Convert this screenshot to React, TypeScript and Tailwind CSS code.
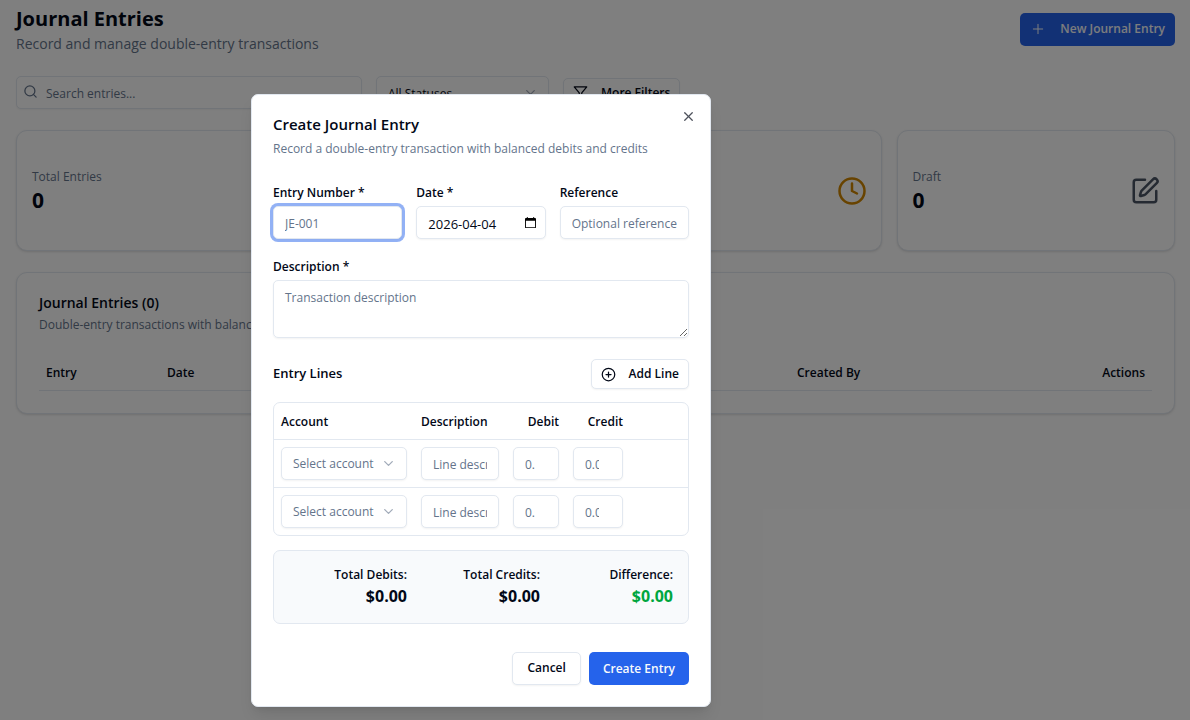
import type { ComponentProps, ReactNode } from "react";
import { ChevronDown, CirclePlus, Clock, Plus, Search, SquarePen, X } from "lucide-react";

const fieldClass =
  "h-[33px] w-full min-w-0 rounded-[5px] border border-[#e2e8f0] bg-white pt-0.5 pl-[11px] text-[#020817] shadow-xs outline-none placeholder:text-[#64748b]";

const outlineButtonClass =
  "flex items-center justify-center rounded-[5px] border border-[#e2e8f0] bg-white text-xs font-semibold text-[#020817] shadow-xs";

function FilterIcon() {
  return (
    <svg viewBox="0 0 24 24" className="size-[15px]" fill="none" stroke="currentColor" strokeWidth="2" strokeLinecap="round" strokeLinejoin="round" aria-hidden="true">
      <polygon points="22 3 2 3 10 12.46 10 19 14 21 14 12.46 22 3" />
    </svg>
  );
}

function CalendarIcon() {
  return (
    <svg viewBox="0 0 12 13" className="h-3 w-[11px]" aria-hidden="true">
      <path fill="#000" fillRule="evenodd" d="M2 0h1v1h6V0h1v1h1a1 1 0 0 1 1 1v9a1 1 0 0 1-1 1H1a1 1 0 0 1-1-1V2a1 1 0 0 1 1-1h1zM1 4v7h10V4z" />
    </svg>
  );
}

function Field({ id, label, className = "text-xs", ...props }: { id: string; label: string } & ComponentProps<"input">) {
  return (
    <div className="flex min-w-0 flex-col gap-[5px]">
      <label htmlFor={id} className="text-xs leading-4 font-semibold">{label}</label>
      <input id={id} className={`${fieldClass} pr-[11px] ${className}`} {...props} />
    </div>
  );
}

function StatCard({ label, value, icon }: { label?: string; value?: number; icon?: ReactNode }) {
  return (
    <section className="flex h-[121px] items-center justify-between rounded-[11px] border border-[#e2e8f0] bg-white pr-[14px] pl-[15px] shadow-sm">
      <div>
        {label && <p className="text-xs leading-[18px] font-medium text-[#64748b]">{label}</p>}
        {value !== undefined && <p className="text-[21px] leading-7 font-bold">{value}</p>}
      </div>
      {icon}
    </section>
  );
}

function Total({ label, tone = "" }: { label: string; tone?: string }) {
  return (
    <div>
      <p className="text-xs leading-[18px] font-semibold">{label}</p>
      <p className={`text-base leading-6 font-bold ${tone}`}>$0.00</p>
    </div>
  );
}

function EntryLine({ line }: { line: number }) {
  return (
    <tr className="border-t border-[#e2e8f0]">
      <td className="p-[7px]">
        <div className="relative">
          <select aria-label={`Account, line ${line}`} className={`${fieldClass} appearance-none pr-[11px] text-xs text-[#64748b]`}>
            <option>Select account</option>
          </select>
          <ChevronDown className="pointer-events-none absolute top-[9px] right-[11px] size-[15px] text-[#64748b] opacity-60" />
        </div>
      </td>
      <td className="p-[7px]">
        <input aria-label={`Description, line ${line}`} placeholder="Line description" className={`${fieldClass} pr-[11px] text-xs`} />
      </td>
      <td className="p-[7px]">
        <input type="number" aria-label={`Debit, line ${line}`} placeholder="0.00" className={`${fieldClass} pr-2 text-xs`} />
      </td>
      <td className="p-[7px]">
        <input type="number" aria-label={`Credit, line ${line}`} placeholder="0.00" className={`${fieldClass} pr-2 text-xs`} />
      </td>
      <td />
    </tr>
  );
}

function EntryDialog() {
  return (
    <div className="absolute inset-0 bg-black/50 pt-[94px] pl-[251px]">
      <form role="dialog" aria-labelledby="dialog-title" className="relative flex w-[460px] flex-col rounded-[7px] border border-[#e2e8f0] bg-white px-[21px] pt-[22px] pb-[21px] shadow-lg">
        <button type="button" aria-label="Close" className="absolute top-[14px] right-[14px] text-[#020817] opacity-70">
          <X className="size-[15px]" />
        </button>
        <h2 id="dialog-title" className="text-[15px] leading-[14px] font-semibold">Create Journal Entry</h2>
        <p className="mt-2 text-xs leading-5 text-[#64748b]">Record a double-entry transaction with balanced debits and credits</p>

        <div className="mt-[26px] grid grid-cols-3 gap-[14px]">
          <Field id="number" label="Entry Number *" placeholder="JE-001" className="text-xs ring-3 ring-[#2563eb]/50" />
          <div className="relative">
            <Field id="date" label="Date *" defaultValue="2026-04-04" className="text-[13px]" />
            <button type="button" aria-label="Pick a date" className="absolute right-[10px] bottom-[10px]">
              <CalendarIcon />
            </button>
          </div>
          <Field id="reference" label="Reference" placeholder="Optional reference" />
        </div>

        <div className="mt-5 flex flex-col gap-[5px]">
          <label htmlFor="description" className="text-xs leading-4 font-semibold">Description *</label>
          <textarea id="description" placeholder="Transaction description" className="h-[58px] w-full rounded-[5px] border border-[#e2e8f0] px-[11px] py-2 text-xs leading-[18px] shadow-xs outline-none placeholder:text-[#64748b]" />
        </div>

        <div className="mt-[21px] flex items-center justify-between">
          <h3 className="text-[13px] font-semibold">Entry Lines</h3>
          <button type="button" className={`${outlineButtonClass} h-[30px] gap-[13px] px-[9px]`}>
            <CirclePlus className="size-[15px]" />
            Add Line
          </button>
        </div>

        <div className="mt-[13px] rounded-[7px] border border-[#e2e8f0]">
          <table className="w-full table-fixed text-xs">
            <thead>
              <tr className="h-9 leading-[18px]">
                <th className="w-[140px] px-[7px] pt-0.5 text-left font-semibold">Account</th>
                <th className="w-[92px] px-[7px] pt-0.5 text-left font-semibold">Description</th>
                <th className="w-[60px] px-[7px] pt-0.5 text-right font-semibold">Debit</th>
                <th className="w-[64px] px-[7px] pt-0.5 text-right font-semibold">Credit</th>
                <td />
              </tr>
            </thead>
            <tbody>
              <EntryLine line={1} />
              <EntryLine line={2} />
            </tbody>
          </table>
        </div>

        <div className="mt-[14px] grid grid-cols-3 gap-[15px] rounded-[7px] border border-[#e2e8f0] bg-[#f8fafc] p-[15px] text-right">
          <Total label="Total Debits:" />
          <Total label="Total Credits:" />
          <Total label="Difference:" tone="text-[#00a63e]" />
        </div>

        <div className="mt-7 flex justify-end gap-2">
          <button type="button" className={`${outlineButtonClass} h-[33px] px-[14px]`}>Cancel</button>
          <button type="button" className="h-[33px] rounded-[5px] bg-[#2563eb] px-[14px] pt-px text-xs font-semibold text-[#f8fafc]">Create Entry</button>
        </div>
      </form>
    </div>
  );
}

export default function App() {
  return (
    <div className="relative min-h-screen bg-white font-['Open_Sans','Noto_Sans',sans-serif] text-[#020817]">
      <main className="flex flex-col pt-1 pr-[15px] pl-4">
        <header className="flex items-center justify-between">
          <div>
            <h1 className="text-xl leading-[30px] font-bold">Journal Entries</h1>
            <p className="text-sm leading-5 text-[#64748b]">Record and manage double-entry transactions</p>
          </div>
          <button type="button" className="flex h-[33px] items-center gap-[14px] rounded-[5px] bg-[#2563eb] px-[10px] text-xs font-semibold text-[#f8fafc]">
            <Plus className="size-4" strokeWidth={1.5} />
            New Journal Entry
          </button>
        </header>

        <div className="mt-[22px] flex items-center gap-[14px]">
          <div className="relative w-[346px]">
            <Search className="absolute top-2 left-[7px] size-[15px] text-[#64748b]" />
            <input type="search" aria-label="Search entries" placeholder="Search entries..." className={`${fieldClass} pr-[11px] pl-[29px] text-xs`} />
          </div>
          <div className="relative w-[173px]">
            <select aria-label="Status" className={`${fieldClass} appearance-none pr-[11px] text-xs`}>
              <option>All Statuses</option>
            </select>
            <ChevronDown className="pointer-events-none absolute top-[9px] right-[11px] size-[15px] text-[#64748b] opacity-60" />
          </div>
          <button type="button" className={`${outlineButtonClass} h-[29px] gap-[13px] px-[9px]`}>
            <FilterIcon />
            More Filters
          </button>
        </div>

        <div className="mt-[21px] grid grid-cols-4 gap-[15px]">
          <StatCard label="Total Entries" value={0} />
          <StatCard />
          <StatCard icon={<Clock className="size-[30px] text-[#d08700]" />} />
          <StatCard label="Draft" value={0} icon={<SquarePen className="size-[30px] text-[#4a5565]" />} />
        </div>

        <section className="mt-[21px] rounded-[11px] border border-[#e2e8f0] bg-white px-[22px] py-[22px] shadow-sm">
          <h2 className="text-sm leading-4 font-semibold">Journal Entries (0)</h2>
          <p className="mt-1 text-xs leading-5 text-[#64748b]">Double-entry transactions with balanced debits and credits</p>
          <table className="mt-[19px] w-full table-fixed text-xs">
            <thead>
              <tr className="h-9 border-b border-[#e2e8f0]">
                <th className="w-[121px] px-[7px] pt-0.5 text-left font-semibold">Entry</th>
                <th className="w-[630px] px-[7px] pt-0.5 text-left font-semibold">Date</th>
                <th className="px-[7px] pt-0.5 text-left font-semibold">Created By</th>
                <th className="px-[7px] pt-0.5 text-right font-semibold">Actions</th>
              </tr>
            </thead>
          </table>
        </section>
      </main>
      <EntryDialog />
    </div>
  );
}
